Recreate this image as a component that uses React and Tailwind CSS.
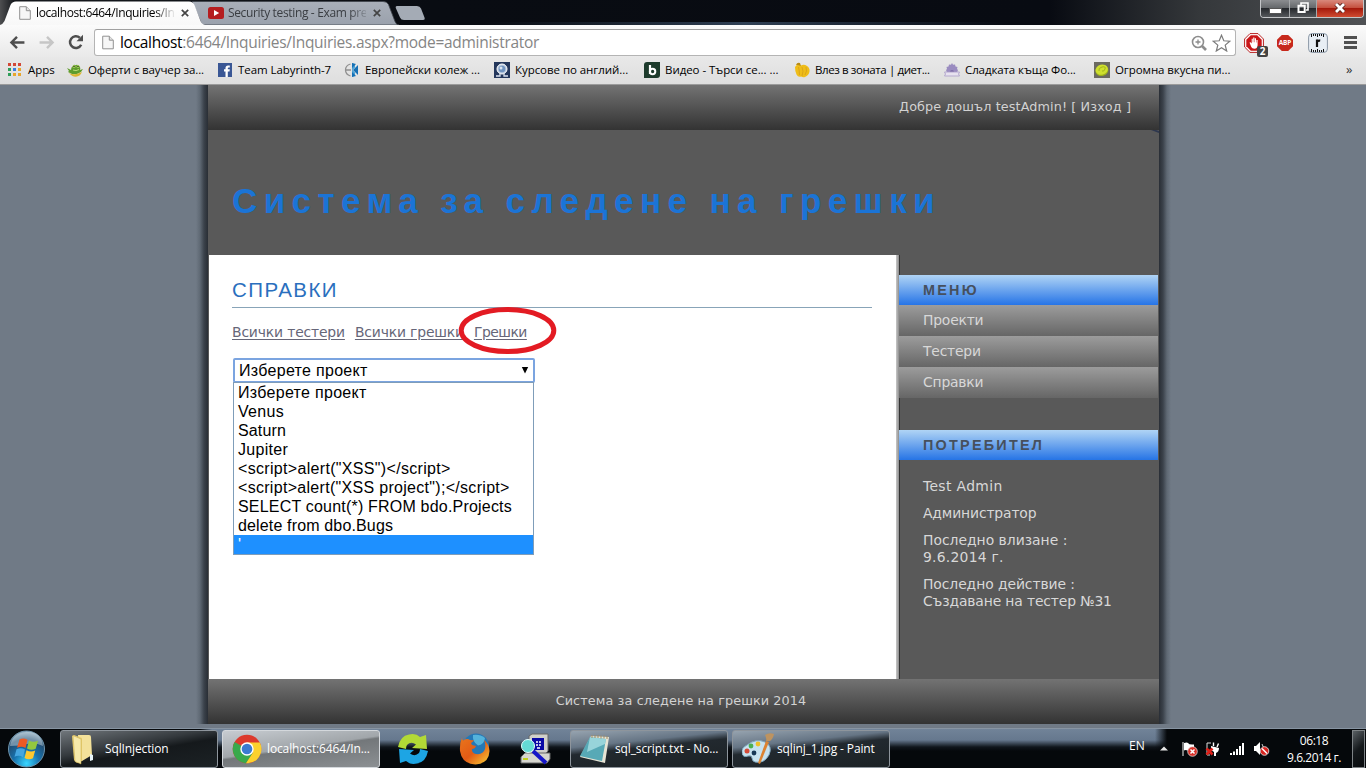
const UI = "font-['Open_Sans','Noto_Sans',sans-serif]";
const VERDANA = "font-['DejaVu_Sans',sans-serif]";
const ARIAL = "font-['Liberation_Sans',sans-serif]";

function PageIcon({ className }) {
  return (
    <svg className={className} viewBox="0 0 12 14" fill="none">
      <path d="M.7.7h6.600l4 4v8.600H.7z" fill="#f6f6f6" stroke="#929292" />
      <path d="M7.300.7v4h4" stroke="#929292" fill="#e4e4e4" />
    </svg>
  );
}

function Cross({ className }) {
  return (
    <svg className={className} viewBox="0 0 8 8">
      <path d="M.8.8l6.400 6.400M7.200.8L.8 7.200" stroke="#444" strokeWidth="1.700" />
    </svg>
  );
}

function TabStrip() {
  return (
    <div className="relative h-[25px] bg-[linear-gradient(90deg,#4e4f51_0,#16191d_14px,#090c12_430px,#080b12_1050px,#35383b_1200px,#505255_1366px)]">
      <svg className="absolute inset-0" width="1366" height="25" viewBox="0 0 1366 25">
        <defs>
          <linearGradient id="tab2" x1="0" y1="0" x2="0" y2="1">
            <stop offset="0" stopColor="#a9afb9" />
            <stop offset="1" stopColor="#9aa1ac" />
          </linearGradient>
          <linearGradient id="tab1" x1="0" y1="0" x2="0" y2="1">
            <stop offset="0" stopColor="#ffffff" />
            <stop offset="1" stopColor="#f8f8f8" />
          </linearGradient>
          <linearGradient id="haze" x1="0" y1="0" x2="1" y2="0">
            <stop offset="0" stopColor="#3c5068" stopOpacity="0" />
            <stop offset=".5" stopColor="#4a6482" />
            <stop offset="1" stopColor="#3c5068" stopOpacity="0" />
          </linearGradient>
        </defs>
        <rect x="480" y="22" width="530" height="3" fill="url(#haze)" opacity=".6" />
        <path d="M192 1.500H383q4 0 5.500 3l6.500 17q1.500 3.500 4 3.500H202z" fill="url(#tab2)" stroke="#3f444b" strokeWidth=".8" />
        <path d="M397 6h20q3 0 4 2.500l3.500 9q.8 2.500-1.500 2.500h-19q-3 0-4-2.500l-4-9Q395 6 397 6z" fill="#a4abb5" />
        <path d="M0 25q3-1 4.500-4l6-16Q12 1.500 16 1.500H189q4 0 5.500 3.500l6 16q1.500 3.500 4.500 4z" fill="url(#tab1)" />
      </svg>
      <div className={`relative flex h-[25px] items-center text-[12px] leading-[25px] ${UI}`}>
        <PageIcon className="ml-[19px] h-[14px] w-[12px] shrink-0" />
        <div className="ml-[5px] w-[138px] shrink-0 whitespace-nowrap tracking-[-0.4px] text-black [mask-image:linear-gradient(90deg,#000_118px,transparent_140px)]">localhost:6464/Inquiries/In</div>
        <Cross className="ml-[7px] h-[8px] w-[8px] shrink-0" />
        <svg className="ml-[19px] h-[12px] w-[16px] shrink-0" viewBox="0 0 16 12">
          <rect width="16" height="12" rx="2.500" fill="#b51d1f" />
          <path d="M6 3l5.200 3L6 9z" fill="#fff" />
        </svg>
        <div className="ml-[4px] w-[138px] shrink-0 whitespace-nowrap tracking-[-0.35px] text-[#3a3d42] [mask-image:linear-gradient(90deg,#000_122px,transparent_142px)]">Security testing - Exam pre</div>
        <Cross className="ml-[7px] h-[8px] w-[8px] shrink-0" />
      </div>
      <div className="absolute right-[2px] top-0 flex h-[18px] w-[104px] overflow-hidden rounded-b-[4px] border border-t-0 border-[#c4c6c8] bg-[#3b3e42]">
        <div className="flex w-[29px] items-center justify-center border-r border-[#a5a8aa] bg-[linear-gradient(#8b8d90_0,#66696c_45%,#25282c_50%,#55585b_100%)]">
          <span className="mt-[4px] h-[4px] w-[11px] bg-white shadow-[0_0_0_1px_#555]" />
        </div>
        <div className="flex w-[27px] items-center justify-center border-r border-[#a5a8aa] bg-[linear-gradient(#8b8d90_0,#66696c_45%,#25282c_50%,#55585b_100%)]">
          <svg className="mt-[-1px]" width="12" height="12" viewBox="0 0 12 12" fill="none">
            <path d="M4 3V1h7v7H9" stroke="#fff" strokeWidth="1.600" />
            <path d="M1.500 3.800h6.200v6.200H1.500z" stroke="#fff" strokeWidth="2" />
          </svg>
        </div>
        <div className="flex flex-1 items-center justify-center bg-[linear-gradient(#d9897c_0,#c5513f_45%,#a51a0c_50%,#cf4b31_100%)]">
          <svg className="mt-[-2px]" width="12" height="10" viewBox="0 0 12 10">
            <path d="M2 1l8 8M10 1L2 9" stroke="#5a211b" strokeWidth="4.500" />
            <path d="M2 1l8 8M10 1L2 9" stroke="#fff" strokeWidth="2.800" />
          </svg>
        </div>
      </div>
    </div>
  );
}

function Toolbar() {
  return (
    <div className={`flex h-[32px] items-start bg-[linear-gradient(#fbfbfb,#e9e9e9)] pt-[4px] ${UI}`}>
      <svg className="ml-[9px] mt-[7px]" width="16" height="13" viewBox="0 0 16 14" fill="none" stroke="#4e4e4e" strokeWidth="2.600">
        <path d="M16 7H2.500M8 1L2 7l6 6" />
      </svg>
      <svg className="ml-[14px] mt-[7px]" width="16" height="13" viewBox="0 0 16 14" fill="none" stroke="#c6c6c6" strokeWidth="2.600">
        <path d="M0 7h13.500M8 1l6 6-6 6" />
      </svg>
      <svg className="ml-[13px] mt-[5px]" width="16" height="16" viewBox="0 0 16 16">
        <path d="M13.200 10.800A5.900 5.900 0 1 1 11.800 3.700" fill="none" stroke="#4e4e4e" strokeWidth="2.500" />
        <path d="M15 .8V7.300H8.500z" fill="#4e4e4e" />
      </svg>
      <div className="ml-[10px] flex h-[27px] w-[1142px] items-center rounded-[3px] border border-[#b4b4b4] border-t-[#a0a0a0] bg-white">
        <PageIcon className="ml-[7px] h-[15px] w-[12px]" />
        <div className="ml-[6px] flex-1 whitespace-nowrap text-[15.500px] leading-[25px] tracking-[-0.29px] text-[#858585]">
          <span className="text-black">localhost</span>:6464/Inquiries/Inquiries.aspx?mode=administrator
        </div>
        <svg className="mr-px" width="16" height="16" viewBox="0 0 16 16" fill="none" stroke="#8d8d8d">
          <circle cx="7" cy="7" r="5.500" strokeWidth="1.600" />
          <path d="M11 11l4 4" strokeWidth="2.600" />
          <path d="M4.500 7h5M7 4.500v5" strokeWidth="1.300" />
        </svg>
        <svg className="ml-[4px] mr-[4px]" width="19" height="18" viewBox="0 0 19 18">
          <path d="M9.500 1.200l2.300 5.600 6 .4-4.600 3.900 1.500 5.900-5.200-3.200L4.300 17l1.500-5.900L1.200 7.200l6-.4z" fill="#fff" stroke="#7b7b7b" strokeWidth="1.200" />
        </svg>
      </div>
      <div className="relative ml-[8px] mt-[4px] h-[24px] w-[25px]">
        <svg width="20" height="20" viewBox="0 0 20 20">
          <path d="M6 .6h8L19.400 6v8L14 19.400H6L.6 14V6z" fill="#fff" stroke="#b82020" />
          <path d="M6.800 2.300h6.400l4.500 4.500v6.400l-4.500 4.500H6.800l-4.500-4.500V6.800z" fill="#c91618" />
          <path d="M5.500 9.500l1.200-.3 1 1.300V5.800h1.100v3.400h.4V4.600h1.200v4.600h.4V5.200h1.200v4.400h.4V7h1.200v5q0 3.800-3.300 3.800-2.200 0-3-1.800z" fill="#fff" />
        </svg>
        <span className="absolute left-[13px] top-[13px] h-[11px] w-[11px] rounded-[2px] bg-[#444] text-center text-[10px] font-bold leading-[11px] text-white">2</span>
      </div>
      <div className="ml-[8px] mt-[6px] flex h-[16px] w-[16px] items-center justify-center bg-[#c7291c] text-[6.500px] font-bold tracking-[-0.2px] text-white [clip-path:polygon(30%_0,70%_0,100%_30%,100%_70%,70%_100%,30%_100%,0_70%,0_30%)]">ABP</div>
      <svg className="ml-[15px] mt-[4px]" width="20" height="20" viewBox="0 0 20 20">
        <rect x=".6" y=".6" width="18.800" height="18.800" rx="3.500" fill="#e8eef4" stroke="#8b98a6" />
        <path d="M3.500 1v3M5.500 1v2M7.500 1v2M9.500 1v3M11.500 1v2M13.500 1v2M15.500 1v3M3.500 16v3M5.500 17v2M7.500 17v2M9.500 16v3M11.500 17v2M13.500 17v2M15.500 16v3" stroke="#111" strokeWidth="1" />
        <path d="M9 14V6.500M9 9q.5-1.800 3.200-1.400" fill="none" stroke="#111" strokeWidth="2.200" />
      </svg>
      <div className="ml-[16px] mt-[7px] flex flex-col gap-[2px]">
        <span className="h-[3px] w-[13px] bg-[#505050]" />
        <span className="h-[3px] w-[13px] bg-[#505050]" />
        <span className="h-[3px] w-[13px] bg-[#505050]" />
      </div>
    </div>
  );
}

function Mark({ width, tracking, label, children }) {
  return (
    <div className={`flex shrink-0 items-center gap-[5px] ${width}`}>
      <svg className="shrink-0" width="16" height="16" viewBox="0 0 16 16">{children}</svg>
      <span className={`whitespace-nowrap ${tracking}`}>{label}</span>
    </div>
  );
}

function Bookmarks() {
  return (
    <div className={`flex h-[28px] items-center border-b border-[#9b9b9b] bg-[linear-gradient(#e8e8e8,#dedede)] pb-[2px] pl-[8px] text-[11.500px] text-black ${UI}`}>
      <div className="flex w-[59px] items-center gap-[7px]">
        <svg width="13" height="13" viewBox="0 0 13 13">
          <path d="M0 0h3v3H0zM5 0h3v3H5zM10 0h3v3h-3z" fill="#d34836" />
          <path d="M0 5h3v3H0zM0 10h3v3H0z" fill="#2f9e58" />
          <path d="M5 5h3v3H5z" fill="#3a7de0" />
          <path d="M10 5h3v3h-3zM5 10h3v3H5zM10 10h3v3h-3z" fill="#e8a62c" />
        </svg>
        <span>Apps</span>
      </div>
      <Mark width="w-[150px]" tracking="tracking-[-0.1px]" label="Оферти с ваучер за...">
        <path d="M0 6l2 1 2 1q0-3 2-4 1-2 2.500-.8Q10 2 11.500 3.500 14 5 13 8l3-1-2 3-4 2H5L1 10l1-1z" fill="#5f9c2c" />
        <path d="M2 11q3 1.500 6 1.200T15 10q-2 4.500-6 4.700T2 11z" fill="#dcb52e" />
        <path d="M6 8q3 1.500 6-.5" stroke="#b9dc74" fill="none" />
        <circle cx="7" cy="4.500" r="1.500" fill="#a9d35b" /><circle cx="11" cy="4.500" r="1.500" fill="#a9d35b" />
        <circle cx="7" cy="4.500" r=".7" fill="#222" /><circle cx="11" cy="4.500" r=".7" fill="#222" />
      </Mark>
      <Mark width="w-[127px]" tracking="tracking-[-0.060px]" label="Team Labyrinth-7">
        <rect x="1" y="1" width="14" height="14" fill="#3a5795" />
        <path d="M8.500 15V9.500H7V7.300h1.500V6q0-2.600 2.600-2.600h1.700v2.200h-1.200q-.8 0-.8.8v.9h2l-.3 2.200h-1.700V15z" fill="#fff" />
      </Mark>
      <Mark width="w-[150px]" tracking="tracking-[-0.05px]" label="Европейски колеж ...">
        <path d="M6.500 2Q1.500 3.500 1.500 8t5 6M1.500 8H7" fill="none" stroke="#909090" strokeWidth="1.300" />
        <path d="M8 1l3 1.500v3L8.500 8 11 10.500v3L8 15V9z" fill="#4ba3d6" />
        <path d="M9 8l5-5v10z" fill="#1670b5" />
        <path d="M8 1v5l4-4zM8 15v-5l4 4z" fill="#1670b5" />
      </Mark>
      <Mark width="w-[150px]" tracking="tracking-[-0.050px]" label="Курсове по англий...">
        <rect width="16" height="16" fill="#24375c" />
        <circle cx="8" cy="7" r="5" fill="#b8c9df" stroke="#fff" />
        <circle cx="8" cy="7" r="3.300" fill="#7093bf" />
        <circle cx="7" cy="6" r="1.500" fill="#dbe6f2" />
        <path d="M2 14h4v-2.500M14 14h-4v-2.500" fill="none" stroke="#d9e2ef" strokeWidth="1.300" />
      </Mark>
      <Mark width="w-[150px]" tracking="tracking-[-0.050px]" label="Видео - Търси се... ...">
        <path d="M0 3Q0 0 3 0h13v13q0 3-3 3H0z" fill="#1d3b2c" />
        <path d="M6 3v9" stroke="#fff" strokeWidth="2.200" />
        <circle cx="8.600" cy="9.500" r="2.700" fill="none" stroke="#fff" strokeWidth="2" />
      </Mark>
      <Mark width="w-[150px]" tracking="tracking-[-0.4px]" label="Влез в зоната | диет...">
        <path d="M1 5q1-2.500 4-2.500l2 1q3-1.500 6 .5 3 2 2.500 5.500T11 15q-2 .8-4-.5-3 .8-4.500-2T1 5z" fill="#efbd18" />
        <path d="M4.500 5q1 4 1 8M8 5q2 4 0 9M12 5q1.500 4-1 8" stroke="#dba51a" fill="none" />
        <path d="M2 3Q3 0 6 1l1 3-3-1z" fill="#b88c17" />
      </Mark>
      <Mark width="w-[150px]" tracking="tracking-[-0.1px]" label="Сладката къща Фо...">
        <path d="M3 10.500L2 8l1-1-.5-2L4.500 4.500 5 2.500l2 .3L8 1l1 1.800 2-.3.500 2 2 .5L13 7l1 1-1 2.500z" fill="#9a8cc0" />
        <path d="M6 10q0-2 2-2t2 2" fill="#7c6da6" />
        <path d="M.5 10h15l-1 2 1 2H.5l1-2z" fill="#e7e2ef" stroke="#a99cc8" strokeWidth=".8" />
      </Mark>
      <Mark width="w-[252px]" tracking="tracking-[-0.080px]" label="Огромна вкусна пи...">
        <rect width="16" height="16" fill="#6b6a60" />
        <ellipse cx="7.800" cy="8.500" rx="6.500" ry="5.500" transform="rotate(-15 8 8)" fill="#9db01c" />
        <ellipse cx="7.800" cy="7.600" rx="6.300" ry="5" transform="rotate(-15 8 8)" fill="#cfe02e" />
        <path d="M5 9q-1-3 3-4t3 2-3 2" fill="none" stroke="#a3b51a" />
      </Mark>
      <span className="text-[13px] text-[#333]">»</span>
    </div>
  );
}

function MenuItem({ children }) {
  return <div className="h-[31px] bg-[linear-gradient(#9c9c9c,#666)] pl-[24px] text-[13.900px] leading-[31px] tracking-[-0.2px] text-[#d8d8d8]">{children}</div>;
}

function SideHead({ children }) {
  return <div className={`h-[30px] bg-[linear-gradient(#b0d4f5,#2674e6)] pl-[24px] text-[14.400px] font-bold leading-[30px] tracking-[2.250px] text-[#46505e] ${ARIAL}`}>{children}</div>;
}

const options = [
  ["Изберете проект", "tracking-[0.3px]"],
  ["Venus", "tracking-[0.3px]"],
  ["Saturn", "tracking-[0.15px]"],
  ["Jupiter", "tracking-[0.3px]"],
  ['<script>alert("XSS")</script>', "tracking-[0.32px]"],
  ['<script>alert("XSS project");</script>', "tracking-[0.3px]"],
  ["SELECT count(*) FROM bdo.Projects", "tracking-[0.2px]"],
  ["delete from dbo.Bugs", "tracking-[0.15px]"],
];

function Site() {
  return (
    <div className={`flex h-[643px] bg-[#707a86] ${VERDANA}`}>
      <div className="h-[639px] w-[208px] bg-[linear-gradient(90deg,transparent_196px,#5f6974_200px,#3b424b_204px,#292e35_208px)]" />
      <div className="relative h-[639px] w-[951px] bg-[#595959]">
        <svg className="absolute left-[941px] top-[45px]" width="10" height="3" viewBox="0 0 10 3">
          <path d="M2 0h5l3 1v2L6 1.500z" fill="#1c2a4a" opacity=".7" />
        </svg>
        <div className="h-[45px] whitespace-nowrap bg-[linear-gradient(#737373,#333)] pr-[28px] text-right text-[12.800px] leading-[43px] tracking-[0.1px] text-[#d2d2d2]">Добре дошъл testAdmin! [ Изход ]</div>
        <div className={`h-[125px] whitespace-nowrap pl-[24px] pt-[49px] text-[35px] font-bold leading-[43px] tracking-[6.400px] text-[#1b74d6] ${ARIAL}`}>Система за следене на грешки</div>
        <div className="flex h-[424px]">
          <div className="relative ml-px w-[687px] bg-white pl-[23px] pt-[21px]">
            <h1 className={`h-[32px] w-[640px] border-b border-[#88a4b8] text-[20.500px] leading-[27px] tracking-[1.450px] text-[#2a6fbe] ${ARIAL}`}>СПРАВКИ</h1>
            <div className="mt-[14px] flex gap-[10px] whitespace-nowrap text-[13.900px] leading-[20px] tracking-[-0.15px] text-[#666678] underline underline-offset-2">
              <span>Всички тестери</span>
              <span className="w-[109px]">Всички грешки</span>
              <span className="tracking-[-0.5px]">Грешки</span>
            </div>
            <div className={`ml-px mt-[16px] flex h-[25px] w-[302px] items-center justify-between rounded-[2px] border-2 border-[#7ba4e0] bg-white pl-[4px] pr-[4px] text-[16px] leading-[20px] tracking-[0.3px] text-black ${ARIAL}`}>
              <span>Изберете проект</span>
              <svg width="8" height="7" viewBox="0 0 8 7"><path d="M.8 0h6.400L4 6.500z" fill="#000" /></svg>
            </div>
            <div className={`absolute left-[24px] top-[127px] h-[173px] w-[301px] border border-[#7f9db9] bg-white text-[16px] leading-[19px] text-black ${ARIAL}`}>
              {options.map(([text, tracking]) => <div key={text} className={`h-[19px] whitespace-pre pl-[4px] ${tracking}`}>{text}</div>)}
              <div className="h-[19px] bg-[#1e90ff] pl-[4px] text-white">'</div>
            </div>
            <svg className="absolute left-[249px] top-[50px]" width="100" height="50" viewBox="0 0 100 50">
              <ellipse cx="49.500" cy="25.500" rx="46.300" ry="21" fill="none" stroke="#e31b23" strokeWidth="5" />
            </svg>
          </div>
          <div className="w-[3px] bg-[linear-gradient(90deg,#c8c8c8,#8d8d8d)]" />
          <div className="w-[259px] bg-[linear-gradient(90deg,#333_1px,transparent_1px)] pt-[20px] text-[13.900px] tracking-[-0.14px] text-[#d8d8d8]">
            <SideHead>МЕНЮ</SideHead>
            <MenuItem>Проекти</MenuItem>
            <MenuItem>Тестери</MenuItem>
            <MenuItem>Справки</MenuItem>
            <div className="h-[32px]" />
            <SideHead>ПОТРЕБИТЕЛ</SideHead>
            <div className="flex flex-col gap-[10px] whitespace-nowrap pl-[24px] pt-[18px] leading-[17px]">
              <p className="tracking-[0.35px]">Test Admin</p>
              <p>Администратор</p>
              <p><span className="tracking-[0px]">Последно влизане :</span><br /><span className="tracking-[0.25px]">9.6.2014 г.</span></p>
              <p><span className="tracking-[-0.08px]">Последно действие :</span><br />Създаване на тестер №31</p>
            </div>
          </div>
        </div>
        <div className="h-[45px] bg-[linear-gradient(#737373,#333)] pr-[5px] text-center text-[12.800px] leading-[43px] tracking-[0.1px] text-[#d2d2d2]">Система за следене на грешки 2014</div>
      </div>
      <div className="h-[639px] flex-1 bg-[linear-gradient(90deg,#292e35_0,#3b424b_4px,#5f6974_8px,transparent_12px)]" />
    </div>
  );
}

function TaskButton({ className, label, children }) {
  return (
    <div className={`flex h-[38px] w-[158px] items-center rounded-[3px] border border-[#8e959c] text-white ${className}`}>
      <svg className="ml-[9px] shrink-0" width="32" height="32" viewBox="0 0 32 32">{children}</svg>
      <span className="ml-[3px] whitespace-nowrap tracking-[-0.130px]">{label}</span>
    </div>
  );
}

function Taskbar() {
  return (
    <div className={`flex h-[40px] items-center border-t border-[#8794a2] bg-[linear-gradient(90deg,#05080b_0,#05080b_200px,transparent_212px,transparent_1155px,#05080b_1167px),linear-gradient(#718398_0,#66788e_11px,#10161c_18px,#05080b_22px)] text-[12px] ${UI}`}>
      <svg className="ml-[7px] mt-[1px]" width="39" height="39" viewBox="0 0 39 39">
        <defs>
          <radialGradient id="orb" cx=".5" cy=".9" r=".9">
            <stop offset="0" stopColor="#39d6ff" />
            <stop offset=".4" stopColor="#1672ae" />
            <stop offset=".75" stopColor="#234c70" />
            <stop offset="1" stopColor="#9db7c9" />
          </radialGradient>
        </defs>
        <circle cx="19.500" cy="19" r="18" fill="url(#orb)" stroke="#6d93ab" />
        <path d="M3 16q2-13 16.500-14T36 16q-8-4-16-2T3 16z" fill="#d5e4ec" opacity=".45" />
        <path d="M12.500 9.500q3.500-2.300 8 .2l-2 8.300q-4-2.500-8.500-.2z" fill="#ee5a24" />
        <path d="M22 10.500q4 2.500 9 .3l-2.300 8q-4.500 2-8.700-.4z" fill="#93c83e" />
        <path d="M9.500 19.300q4.500-2.200 8.500.2l-2 7.700q-4-2.700-8.500-.4z" fill="#45a6e0" />
        <path d="M19.500 20.200q4.200 2.500 8.700.4l-2.200 7.600q-4.300 2.200-8.500-.3z" fill="#fdc82f" />
      </svg>
      <TaskButton className="ml-[14px] bg-[linear-gradient(170deg,#70767b_0,#34393d_40%,#15191c_55%,#1c2225_100%)]" label="SqlInjection">
        <path d="M8 2h11q2 0 2 2l1 18-10 6-3-2z" fill="#f3e19a" />
        <path d="M2 3l2-1 8 3v23l-5 2-3-3z" fill="#e6cd70" />
        <path d="M3 2.500l8 3.500v25l-6-2.500z" fill="#f6e9aa" stroke="#c9ac4d" strokeWidth=".5" />
        <path d="M20 21l3 1v5l-3 1z" fill="#e8f5fa" />
      </TaskButton>
      <TaskButton className="ml-[4px] border-[#d4d8dc] bg-[linear-gradient(172deg,#c7ccd1_0,#a1a6aa_46%,#73777a_50%,#8c9093_100%)]" label="localhost:6464/In...">
        <circle cx="15" cy="16" r="14.300" fill="#dc3a2d" />
        <path d="M15 16L2.600 8.900A14.300 14.300 0 0 0 14 30.300l7.200-10.500z" fill="#39a94b" />
        <path d="M15 9.500h12.800A14.300 14.300 0 0 1 14 30.300l7-10.800z" fill="#fbd12e" />
        <circle cx="15" cy="16" r="6.700" fill="#fff" />
        <circle cx="15" cy="16" r="5.300" fill="#3a7bd0" />
      </TaskButton>
      <svg className="ml-[17px]" width="32" height="32" viewBox="0 0 32 32">
        <path d="M1 14Q3 3 12 1.500 19 0 23 4l6-2 1 14-15-1 4-3.500Q14 8 10 12q-1 1.500-1 4z" fill="#b2d936" />
        <path d="M31 18q-2 11-11 12.500-7 1.500-11-2.500l-6 2-1-14 15 1-4 3.500q5 3.500 9-.5 1-1.500 1-4z" fill="#1da5e4" />
      </svg>
      <svg className="ml-[30px]" width="32" height="32" viewBox="0 0 32 32">
        <defs>
          <linearGradient id="fox" x1="0" y1="0" x2="1" y2="1">
            <stop offset="0" stopColor="#e9751c" />
            <stop offset=".5" stopColor="#e25b15" />
            <stop offset="1" stopColor="#fbd137" />
          </linearGradient>
        </defs>
        <circle cx="17" cy="13.500" r="13" fill="#2578b5" />
        <path d="M14 2q7-1 12 3-1 7-7 7.500-6-4-5-10.500z" fill="#54b3db" />
        <path d="M3 5q0 2 1.500 2.500Q8 5 11 7q2 .5 4 .3-1 1.500-3 2.700l1 2 4 1q-1 3-4 3-.5 4 4 5 7 1 9-5 1-5-1-9 5 4 5.500 11-.5 12.500-14 13.500Q3 31 1 18 .5 10 3 5z" fill="url(#fox)" />
      </svg>
      <svg className="ml-[29px]" width="32" height="32" viewBox="0 0 32 32">
        <path d="M9 3l3-2h16v17l-3 3H9z" fill="#d0d0ca" stroke="#666" />
        <path d="M12 5h12v12H12z" fill="#0909a5" />
        <path d="M16 9h2m1 0h2m-5 3h2m1 0h2m-4 3h3" stroke="#fff" strokeWidth="1.500" />
        <path d="M1 24l4-4h25v6l-3 4H1z" fill="#d6d6cf" stroke="#666" />
        <circle cx="8" cy="13" r="6.500" fill="#64dad5" stroke="#e6ffff" />
        <path d="M13 18l13 12" stroke="#1616c8" strokeWidth="4" />
        <path d="M3 26h5" stroke="#c0d020" strokeWidth="2" />
      </svg>
      <TaskButton className="ml-[18px] bg-[linear-gradient(174deg,#96a3af_0,#667585_32%,#22292f_46%,#1c2225_100%)]" label="sql_script.txt - No...">
        <path d="M11 3l18 1-4 26L0 24z" fill="#e6e4d5" />
        <path d="M10 4l16 2-4 22L0 23z" fill="#57a9b6" />
        <path d="M10 4l16 2-1 5-18 8z" fill="#a9dfe4" opacity=".8" />
        <path d="M12 2v3m3-3v3m3-3v3m3-2.500v3m3-3v3m3-2.500v3" stroke="#a08b60" />
      </TaskButton>
      <TaskButton className="ml-[4px] bg-[linear-gradient(174deg,#96a3af_0,#667585_32%,#22292f_46%,#1c2225_100%)]" label="sqlinj_1.jpg - Paint">
        <path d="M5 12q9-7 18-3 8 4 4 13-5 9-14 7-3-1-3-4t-4-2q-5 2-6-3T5 12z" fill="#c7e2ef" stroke="#7ea5bc" />
        <circle cx="5" cy="18" r="2.500" fill="#d54a37" /><circle cx="9" cy="13" r="2.400" fill="#4cb052" /><circle cx="16" cy="11" r="2.400" fill="#efc12a" /><circle cx="12" cy="20" r="2.400" fill="#173856" />
        <path d="M24 8l3 1-9 22-2-1z" fill="#dc8331" />
        <path d="M24 8q1-2-1-6 4-3 9-1-1 5-4 7z" fill="#bd9360" />
      </TaskButton>
      <span className="ml-[239px] mt-[-5px] w-[31px] text-[12px] text-white">EN</span>
      <svg width="8" height="5" viewBox="0 0 8 5"><path d="M0 4.500L4 .5l4 4z" fill="#e6e6e6" /></svg>
      <svg className="ml-[14px]" width="16" height="16" viewBox="0 0 16 16">
        <path d="M1 1v14" stroke="#ccc" strokeWidth="1.200" /><path d="M2 2q3-1 4 0 1 2 6 1.500v6q-3 1-6 0t-4 0z" fill="#fff" />
        <circle cx="10.500" cy="10.500" r="4.800" fill="#d93129" stroke="#eee" strokeWidth=".7" /><path d="M8.500 8.500l4 4m0-4l-4 4" stroke="#fff" strokeWidth="1.500" />
      </svg>
      <svg className="ml-[7px]" width="16" height="16" viewBox="0 0 16 16">
        <path d="M6 2H2v12h3" stroke="#ddd" fill="none" />
        <path d="M8.500 5V1.500M12 6l1.500-3.500" stroke="#fff" strokeWidth="1.400" />
        <path d="M6 5l8 2q0 4-3 5v3H9v-4L6 9z" fill="#fff" />
        <path d="M1.500 7.500l6 6m0-6l-6 6" stroke="#dc1e17" strokeWidth="2.600" />
      </svg>
      <svg className="ml-[9px]" width="15" height="12" viewBox="0 0 15 12"><path d="M1 12v-2m3 2V8.500m3 3.500V6m3 6V3m3 9V0" stroke="#fff" strokeWidth="2" /></svg>
      <svg className="ml-[9px]" width="16" height="16" viewBox="0 0 16 16">
        <path d="M0 5h2l4-4v13l-4-4H0z" fill="#fff" /><path d="M8 3q3 3 0 8" stroke="#ccc" fill="none" />
        <circle cx="10.500" cy="10" r="4.300" fill="#d7221d" stroke="#eee" strokeWidth=".8" /><path d="M8 7.500l5 5" stroke="#fff" strokeWidth="1.500" />
      </svg>
      <div className="ml-[13px] w-[62px] text-center leading-[17px] tracking-[-0.45px] text-white">
        <div>06:18</div>
        <div className="whitespace-nowrap">9.6.2014 г.</div>
      </div>
      <div className="ml-auto mr-px h-[38px] w-[13px] border border-[#7e8386] bg-[linear-gradient(135deg,#5b6165,#14181b_50%,#080b0d)]" />
    </div>
  );
}

export default function App() {
  return (
    <div className="h-[768px] w-[1366px] overflow-hidden bg-[#707a86]">
      <TabStrip />
      <Toolbar />
      <Bookmarks />
      <Site />
      <Taskbar />
    </div>
  );
}
